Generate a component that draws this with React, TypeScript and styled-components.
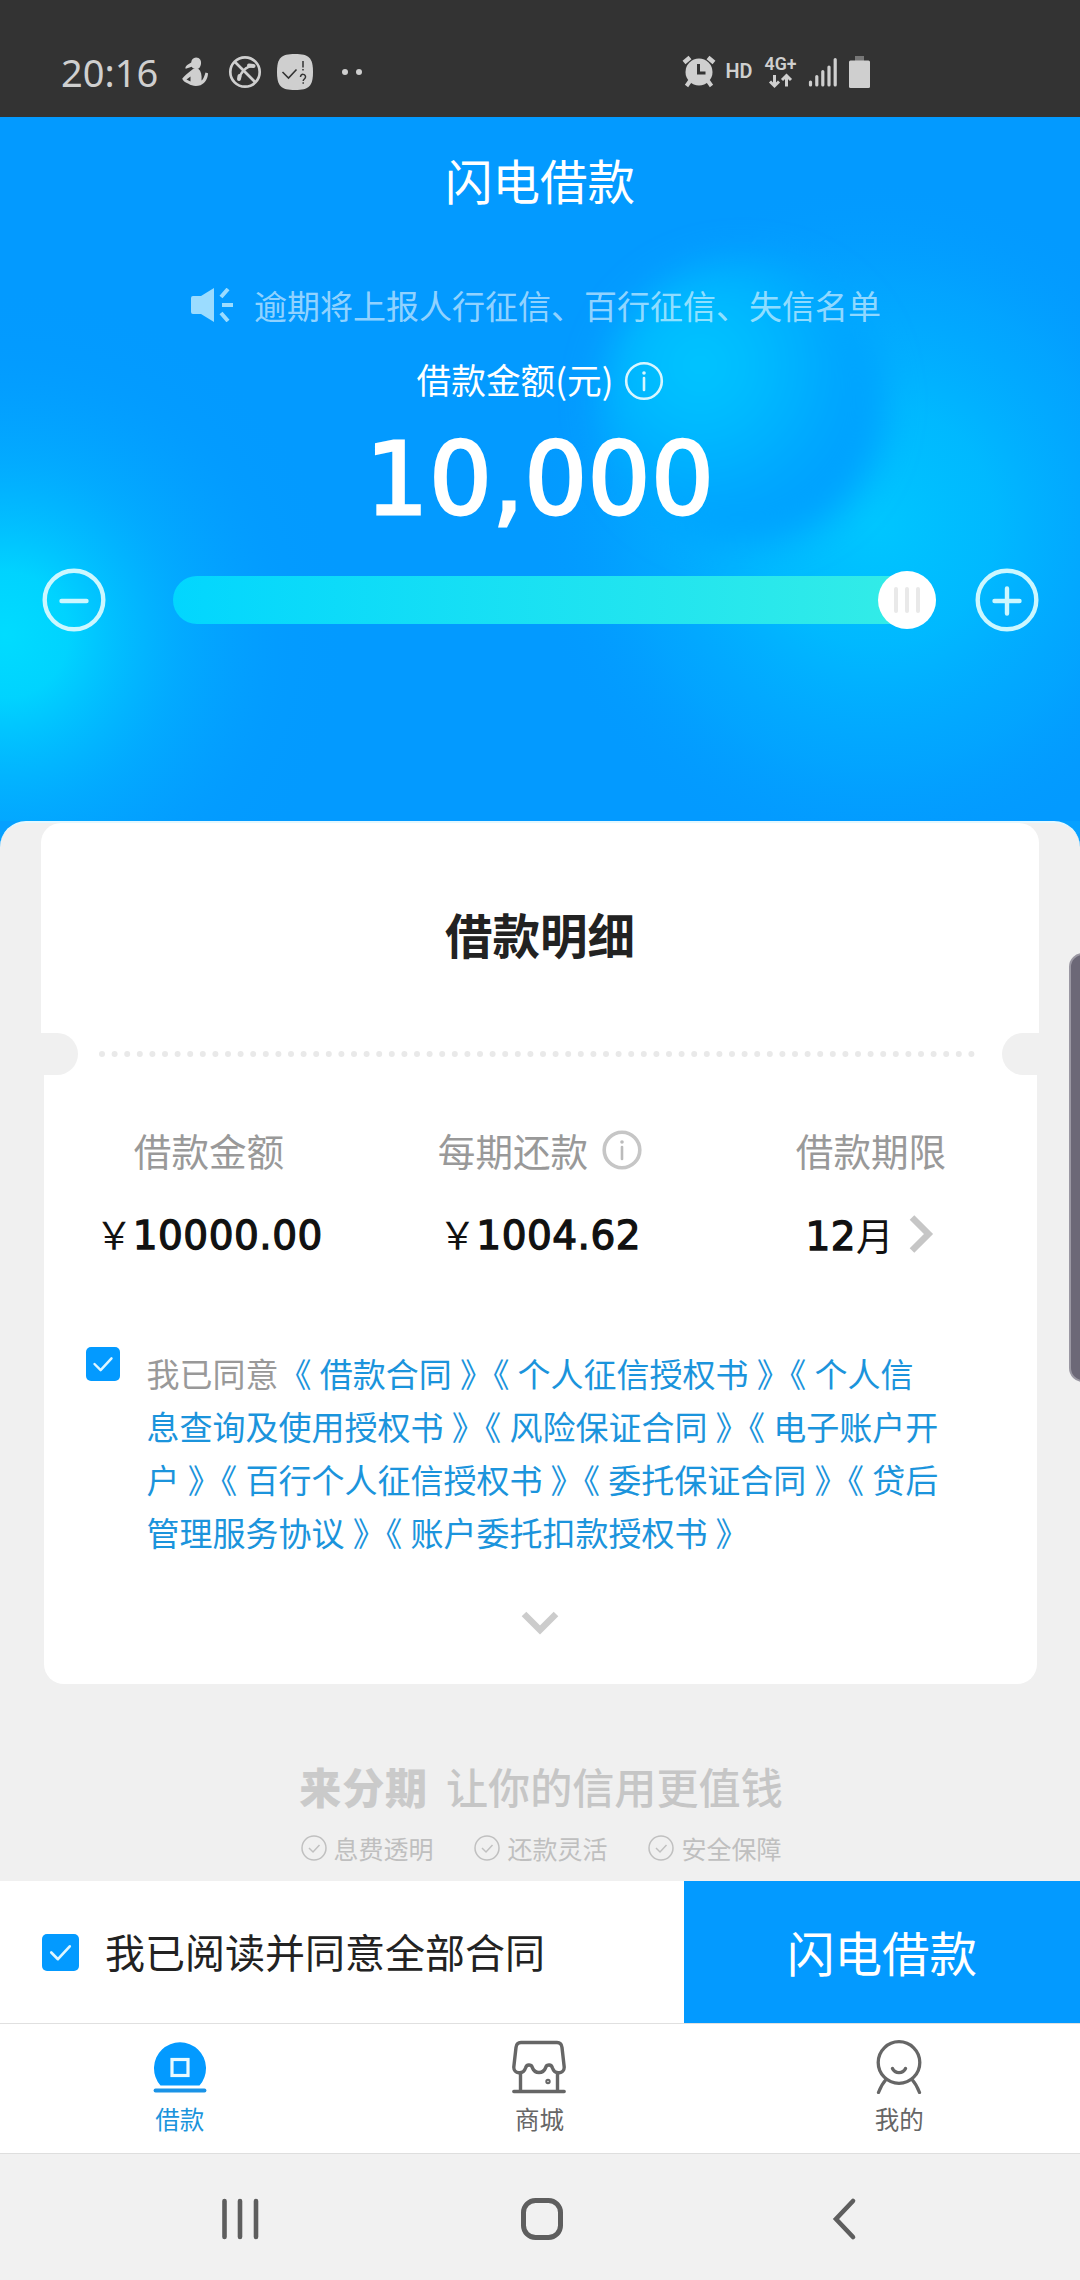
import React from 'react';
import styled, { createGlobalStyle } from 'styled-components';

const Global = createGlobalStyle`
  * { box-sizing: border-box; }
  html, body { margin: 0; padding: 0; }
  body {
    width: 1080px;
    background: #f0f0f0;
    font-family: "Noto Sans", "Noto Sans CJK SC", sans-serif;
  }
  svg { display: block; flex: none; }
`;

const cjk = '"Noto Sans CJK SC", sans-serif';
const digits = '"DejaVu Sans", "Noto Sans CJK SC", sans-serif';

const Screen = styled.div`
  position: relative;
  width: 1080px;
  height: 2280px;
  display: flex;
  flex-direction: column;
  overflow: hidden;
  background: #f0f0f0;
  font-family: ${cjk};
`;

const StatusBar = styled.div`
  height: 117px;
  flex: none;
  display: flex;
  align-items: center;
  padding: 27px 0 0 61px;
  background: #333;
  color: #cfcfcf;
`;

const Clock = styled.span`
  width: 121px;
  font: 400 38px/1 "Noto Sans", sans-serif;
`;

const Hero = styled.header`
  height: 704px;
  flex: none;
  display: flex;
  flex-direction: column;
  align-items: center;
  position: relative;
  background: #039aff;
`;

const HeroArt = styled.svg`
  position: absolute;
  left: 0;
  top: 0;
`;

const Title = styled.h1`
  position: relative;
  margin: 31px 0 0;
  font-size: 47.5px;
  line-height: 64px;
  font-weight: 400;
  color: #fff;
`;

const Notice = styled.div`
  position: relative;
  display: flex;
  align-items: center;
  gap: 20px;
  margin-top: 68px;
  padding-right: 9px;
  font-size: 33px;
  line-height: 50px;
  color: rgba(255, 255, 255, 0.58);
`;

const AmountLabel = styled.div`
  position: relative;
  display: flex;
  align-items: center;
  gap: 11px;
  margin: 24px 0 0 1px;
  font-size: 34.7px;
  line-height: 50px;
  color: #fff;

  svg {
    margin-top: 4px;
  }
`;

const Amount = styled.div`
  position: relative;
  margin-top: 16px;
  font: 400 99px/120px ${digits};
  letter-spacing: 0.4px;
  color: #fff;
  -webkit-text-stroke: 2.8px #fff;
`;

const SliderRow = styled.div`
  position: relative;
  width: 100%;
  display: flex;
  align-items: center;
  justify-content: space-between;
  margin-top: 28px;
  padding: 0 41px 0 42px;
`;

const Track = styled.div`
  width: 763px;
  height: 48px;
  margin-left: 27px;
  display: flex;
  align-items: center;
  justify-content: flex-end;
  border-radius: 24px;
  background: linear-gradient(90deg, #02d6fe, #35ede6);
`;

const Thumb = styled.div`
  width: 58px;
  height: 58px;
  flex: none;
  display: flex;
  align-items: center;
  justify-content: center;
  gap: 7px;
  border-radius: 50%;
  background: #fff;
`;

const Grip = styled.i`
  width: 4px;
  height: 26px;
  border-radius: 2px;
  background: #e9e9e9;
`;

const SheetBack = styled.div`
  flex: none;
  background: #06a0ff;
`;

const Sheet = styled.main`
  height: 1060px;
  display: flex;
  flex-direction: column;
  align-items: center;
  border-radius: 26px 26px 0 0;
  border-top: 2px solid #e4f8ff;
  background: #f0f0f0;
`;

const CardTop = styled.section`
  width: 998px;
  height: 210px;
  display: flex;
  align-items: center;
  justify-content: center;
  padding-top: 10px;
  border-radius: 20px 20px 0 0;
  background: #fff;
  font-size: 47.5px;
  font-weight: 700;
  color: #222;
`;

const Perforation = styled.div`
  width: 998px;
  height: 42px;
  display: flex;
  align-items: center;
  justify-content: space-between;
  background: #fff;

  svg {
    margin-right: 4px;
  }
`;

const Notch = styled.i<{ $side: 'left' | 'right' }>`
  width: 37px;
  height: 42px;
  background: #f0f0f0;
  border-radius: ${(p) => (p.$side === 'left' ? '0 21px 21px 0' : '21px 0 0 21px')};
`;

const CardBody = styled.section`
  width: 993px;
  height: 609px;
  display: flex;
  flex-direction: column;
  align-items: center;
  border-radius: 0 0 20px 20px;
  background: #fff;
`;

const Facts = styled.div`
  width: 100%;
  display: grid;
  grid-template-columns: repeat(3, 331px);
  margin-top: 47px;
`;

const Fact = styled.div`
  display: flex;
  flex-direction: column;
  align-items: center;
`;

const FactLabel = styled.div`
  display: flex;
  align-items: center;
  gap: 14px;
  font-size: 37.6px;
  line-height: 56px;
  color: #999;
`;

const FactValue = styled.div<{ $drop?: number }>`
  display: flex;
  align-items: baseline;
  height: 56px;
  margin-top: ${(p) => 27 + (p.$drop ?? 0)}px;
  font: 400 39px/56px ${digits};
  color: #111;

  svg {
    align-self: center;
    margin: 0 2px 0 14px;
  }
`;

const Num = styled.span`
  -webkit-text-stroke: 1.3px #111;
  letter-spacing: 0.5px;
`;

const Unit = styled.span`
  font: 400 37.5px/56px ${cjk};
`;

const Agreement = styled.div`
  width: 100%;
  display: flex;
  gap: 27px;
  margin-top: 85px;
  padding-left: 42px;
`;

const Box = styled.span<{ $size: number }>`
  width: ${(p) => p.$size}px;
  height: ${(p) => p.$size}px;
  flex: none;
  display: flex;
  align-items: center;
  justify-content: center;
  border-radius: 5px;
  background: #039aff;
`;

const Terms = styled.p`
  width: 795px;
  margin: 0;
  font-size: 33px;
  line-height: 53px;
  word-spacing: 0.8px;
  text-align: left;
  color: #999;
`;

const Link = styled.span`
  color: #1b94dc;
`;

const Fold = styled.div`
  margin-top: 51px;
`;

const Slogan = styled.div`
  display: flex;
  align-items: center;
  gap: 18px;
  margin: 72px 0 0 2px;
  font-size: 42.1px;
  line-height: 60px;
  font-weight: 500;
  color: #c6c6c6;
`;

const Brand = styled.b`
  font-weight: 900;
  letter-spacing: 0.8px;
  color: #cacaca;
`;

const Perks = styled.div`
  width: 481px;
  display: flex;
  justify-content: space-between;
  margin: 14px 0 0 2px;
`;

const Perk = styled.div`
  display: flex;
  align-items: center;
  gap: 7px;
  font-size: 25px;
  line-height: 36px;
  color: #bfbfbf;
`;

const ActionBar = styled.div`
  height: 142px;
  flex: none;
  display: flex;
  background: #fff;
`;

const Consent = styled.div`
  flex: 1;
  display: flex;
  align-items: center;
  gap: 26px;
  padding-left: 42px;
  font-size: 40px;
  color: #222;
`;

const ConsentText = styled.span`
  padding-bottom: 2px;
`;

const Submit = styled.div`
  width: 396px;
  display: flex;
  align-items: center;
  justify-content: center;
  padding-bottom: 2px;
  font-size: 47.5px;
  color: #fff;
  background: #039aff;
`;

const Tabs = styled.nav`
  height: 131px;
  flex: none;
  display: grid;
  grid-template-columns: repeat(3, 1fr);
  padding-right: 1px;
  border-top: 1px solid #e0e0e0;
  border-bottom: 1px solid #dedede;
  background: #fff;
`;

const Tab = styled.div<{ $active?: boolean }>`
  display: flex;
  flex-direction: column;
  align-items: center;
  gap: 7px;
  padding-top: 16px;
  font-size: 24.5px;
  line-height: 36px;
  color: ${(p) => (p.$active ? '#1b94dc' : '#666')};
`;

const SystemNav = styled.div`
  flex: 1;
  display: flex;
  align-items: center;
  justify-content: space-between;
  padding: 4px 223px 0 220px;
  background: #f1f1f1;
`;

const HomeKey = styled.svg`
  margin-right: 7px;
`;

const EdgeHandle = styled.div`
  position: absolute;
  right: -17px;
  top: 953px;
  width: 28px;
  height: 429px;
  border: 2px solid #9b98a3;
  border-radius: 14px;
  background: #6c6877;
`;

const Info = ({ stroke, width, mark }: { stroke: string; width: number; mark: string }) => (
  <svg width="40" height="40" viewBox="0 0 40 40" fill="none">
    <circle cx="20" cy="20" r="17.800" stroke={stroke} strokeWidth={width} />
    <circle cx="20" cy="12" r="1.800" fill={mark} />
    <path d="M20 17v12" stroke={mark} strokeWidth="2.600" strokeLinecap="round" />
  </svg>
);

const Check = ({ size }: { size: number }) => (
  <svg width={size} height={size} viewBox="0 0 36 36" fill="none">
    <path d="M9 18l6.500 6.500L27 12" stroke="#dff6ff" strokeWidth="2.600" strokeLinecap="round" strokeLinejoin="round" />
  </svg>
);

const Round = ({ plus }: { plus?: boolean }) => (
  <svg width="64" height="64" viewBox="0 0 64 64" fill="none" stroke="#ccf7ff" strokeLinecap="round">
    <circle cx="32" cy="32" r="29.300" strokeWidth="4.400" />
    <path d={plus ? 'M19.500 33h25M32 20.500v25' : 'M19.500 33h25'} strokeWidth="4.400" />
  </svg>
);

const StatusIcons = () => (
  <svg width="898" height="50" viewBox="182 47 898 50" fill="#cfcfcf">
    {/* kneeling figure with a ponytail */}
    <path d="M196 57.500c4 0 5.500 3 5 6.500-.5 3-2 5-4.500 5.200-2.300 0-4-1-4.800-2.500l-6 2c-.8-.8 0-2.500 1.500-3.800l4-2.300c.2-3 2-5.100 4.800-5.100z" />
    <path
      fillRule="evenodd"
      d="M193 69h5.500c2.500 2 3.500 6 3 11.500 2-1 3-5 4-8l2.500.8c0 5-3 10-7.500 12-5 1.500-9 .5-12-1.500-3-1.200-5.500-2.700-6.300-5 2-2.800 6.800-6.800 10.800-9.800zM190.500 76.500l-4 3 4 2z"
    />
    {/* blocked call */}
    <g fill="none" stroke="#cfcfcf">
      <circle cx="245" cy="72" r="14.700" strokeWidth="2.700" />
      <path d="M234.500 61.500l21 21" strokeWidth="2.700" />
      <path d="M253 66c-7 0-13 7-13.500 13" strokeWidth="2.500" />
      <path d="M249 65.500l4.500.5M239.500 76l-.5 3" strokeWidth="4" strokeLinecap="round" />
    </g>
    {/* reminder */}
    <path d="M295 54c14 0 18 4 18 18s-4 18-18 18-18-4-18-18 4-18 18-18z" />
    <path d="M282.500 72l6 6 8-8.500" fill="none" stroke="#333" strokeWidth="1.600" />
    <path d="M303 61v6.500M303 69v1.500M300.500 77c0-4 5.500-3 5 0 0 2-2.300 2-2.300 4M303.200 82.300v1.400" fill="none" stroke="#333" strokeWidth="1.500" />
    <circle cx="345" cy="72" r="3" />
    <circle cx="359" cy="72" r="3" />
    {/* alarm */}
    <circle cx="699" cy="72" r="13.500" />
    <path d="M684 62.500l6-5M714 62.500l-6-5" stroke="#cfcfcf" strokeWidth="4.500" />
    <path d="M690 81l-3.500 5M708 81l3.500 5" stroke="#cfcfcf" strokeWidth="4" />
    <path d="M698.500 64v9h7" fill="none" stroke="#333" strokeWidth="3" />
    <text x="725.500" y="77.500" fontFamily="Roboto, sans-serif" fontSize="20.500" fontWeight="600" textLength="27" lengthAdjust="spacingAndGlyphs">HD</text>
    <text x="764.500" y="70" fontFamily="Roboto, sans-serif" fontSize="18.500" fontWeight="600" textLength="32" lengthAdjust="spacingAndGlyphs">4G+</text>
    <path d="M774.500 75v11M770 81.500l4.500 4.500 4.500-4.500M786.500 86.500v-11M782 80l4.500-4.500 4.500 4.500" fill="none" stroke="#cfcfcf" strokeWidth="3" />
    <path d="M810.500 82v3M816.800 76.500v8.500M822.800 71.500v13.500M829 67v18M835.200 59.500v25.500" stroke="#cfcfcf" strokeWidth="3.200" strokeLinecap="round" />
    <path d="M855 56h9v5h-9z" fill="#777" />
    <rect x="849" y="60.500" width="21" height="27.500" rx="1.500" />
  </svg>
);

const perks = ['息费透明', '还款灵活', '安全保障'];

const agreements = [
  '借款合同',
  '个人征信授权书',
  '个人信息查询及使用授权书',
  '风险保证合同',
  '电子账户开户',
  '百行个人征信授权书',
  '委托保证合同',
  '贷后管理服务协议',
  '账户委托扣款授权书',
];

export default function App() {
  return (
    <Screen>
      <Global />
      <StatusBar>
        <Clock>20:16</Clock>
        <StatusIcons />
      </StatusBar>

      <Hero>
        <HeroArt width="1080" height="704" viewBox="0 117 1080 704">
          <defs>
            <radialGradient id="left" gradientUnits="userSpaceOnUse" cx="5" cy="635" r="350">
              <stop offset="0" stopColor="#00dcff" />
              <stop offset="0.180" stopColor="#00d8ff" stopOpacity="0.920" />
              <stop offset="0.500" stopColor="#02bcff" stopOpacity="0.480" />
              <stop offset="0.800" stopColor="#03a4ff" stopOpacity="0.140" />
              <stop offset="1" stopColor="#039aff" stopOpacity="0" />
            </radialGradient>
            <radialGradient id="right" gradientUnits="userSpaceOnUse" cx="875" cy="525" r="345">
              <stop offset="0" stopColor="#00c6ff" />
              <stop offset="0.350" stopColor="#00bcff" stopOpacity="0.900" />
              <stop offset="0.700" stopColor="#02acff" stopOpacity="0.550" />
              <stop offset="1" stopColor="#039aff" stopOpacity="0" />
            </radialGradient>
            <radialGradient id="orb" gradientUnits="userSpaceOnUse" cx="700" cy="365" r="200">
              <stop offset="0" stopColor="#00c6ff" />
              <stop offset="0.350" stopColor="#00b8ff" />
              <stop offset="0.700" stopColor="#02a6ff" />
              <stop offset="1" stopColor="#039eff" />
            </radialGradient>
            <filter id="soft" x="-30%" y="-30%" width="160%" height="160%">
              <feGaussianBlur stdDeviation="18" />
            </filter>
          </defs>
          <rect y="117" width="1080" height="704" fill="url(#left)" />
          <rect y="117" width="1080" height="704" fill="url(#right)" />
          <circle cx="743" cy="402" r="142" fill="url(#orb)" filter="url(#soft)" />
        </HeroArt>
        <Title>闪电借款</Title>
        <Notice>
          <svg width="44" height="34" viewBox="0 0 44 34" fill="#9bdcff">
            <path d="M1 10q0-2 2-2h8L24 0v34L11 26H3q-2 0-2-2z" />
            <path d="M31 9l7-8M32 17h11M31 25l7 8" stroke="#9bdcff" strokeWidth="4" />
          </svg>
          逾期将上报人行征信、百行征信、失信名单
        </Notice>
        <AmountLabel>
          借款金额(元)
          <Info stroke="#d8f6ff" width={2.6} mark="#d8f6ff" />
        </AmountLabel>
        <Amount>10,000</Amount>
        <SliderRow>
          <Round />
          <Track>
            <Thumb>
              <Grip />
              <Grip />
              <Grip />
            </Thumb>
          </Track>
          <Round plus />
        </SliderRow>
      </Hero>

      <SheetBack>
        <Sheet>
          <CardTop>借款明细</CardTop>
          <Perforation>
            <Notch $side="left" />
            <svg width="880" height="8" viewBox="0 0 880 8">
              <path d="M4 4H876" stroke="#e9e9e9" strokeWidth="6" strokeLinecap="round" strokeDasharray="0 12.600" />
            </svg>
            <Notch $side="right" />
          </Perforation>
          <CardBody>
            <Facts>
              <Fact>
                <FactLabel>借款金额</FactLabel>
                <FactValue>
                  <Unit>￥</Unit>
                  <Num>10000.00</Num>
                </FactValue>
              </Fact>
              <Fact>
                <FactLabel>
                  每期还款
                  <Info stroke="#c6c6c6" width={3.6} mark="#bbb" />
                </FactLabel>
                <FactValue>
                  <Unit>￥</Unit>
                  <Num>1004.62</Num>
                </FactValue>
              </Fact>
              <Fact>
                <FactLabel>借款期限</FactLabel>
                <FactValue $drop={1}>
                  <Num>12</Num>
                  <Unit>月</Unit>
                  <svg width="27" height="38" viewBox="0 0 27 38" fill="none">
                    <path d="M4 2.500L20.500 19 4 35.500" stroke="#c6c6c6" strokeWidth="6.500" />
                  </svg>
                </FactValue>
              </Fact>
            </Facts>
            <Agreement>
              <Box $size={34}>
                <Check size={34} />
              </Box>
              <Terms>
                我已同意<Link>{agreements.map((name) => `《 ${name} 》`).join('')}</Link>
              </Terms>
            </Agreement>
            <Fold>
              <svg width="38" height="26" viewBox="0 0 38 26" fill="none">
                <path d="M3 4l16 16L35 4" stroke="#ccc" strokeWidth="6.500" />
              </svg>
            </Fold>
          </CardBody>
          <Slogan>
            <Brand>来分期</Brand>
            <span>让你的信用更值钱</span>
          </Slogan>
          <Perks>
            {perks.map((p) => (
              <Perk key={p}>
                <svg width="26" height="26" viewBox="0 0 26 26" fill="none" stroke="#c0c0c0" strokeWidth="1.500">
                  <circle cx="13" cy="13" r="12" />
                  <path d="M8 13l4 4 6.500-7" />
                </svg>
                {p}
              </Perk>
            ))}
          </Perks>
        </Sheet>
      </SheetBack>

      <ActionBar>
        <Consent>
          <Box $size={37}>
            <Check size={37} />
          </Box>
          <ConsentText>我已阅读并同意全部合同</ConsentText>
        </Consent>
        <Submit>闪电借款</Submit>
      </ActionBar>

      <Tabs>
        <Tab $active>
          <svg width="54" height="54" viewBox="0 0 54 54">
            <path d="M7.500 45.500a26 26 0 1 1 39 0z" fill="#039aff" />
            <rect x="19" y="19.500" width="16" height="16" fill="none" stroke="#e8faff" strokeWidth="3.200" />
            <path d="M2.500 50.500h49" stroke="#1b93e6" strokeWidth="3.800" strokeLinecap="round" />
          </svg>
          借款
        </Tab>
        <Tab>
          <svg width="54" height="54" viewBox="0 0 54 54" fill="none" stroke="#666" strokeWidth="3.400" strokeLinecap="round" strokeLinejoin="round">
            <path d="M9 2.500h36q4.500 0 5 5L52.200 27c.3 7-9.500 8-11.700 1q-1-3.500-4-3-2.500.3-3 3c-2.500 6-10.500 6-13 0q-.5-2.700-3-3-3-.5-4 3c-2.200 7-12 6-11.700-1L4 7.500q.5-5 5-5z" />
            <path d="M8.500 33v18M45.500 33v18M1.800 51.500h50.400" />
            <circle cx="36" cy="41.500" r="1" />
          </svg>
          商城
        </Tab>
        <Tab>
          <svg width="54" height="54" viewBox="0 0 54 54" fill="none" stroke="#666" strokeWidth="3.300" strokeLinecap="round">
            <circle cx="27" cy="22.500" r="20.800" />
            <path d="M20.500 28.500c2.500 5.500 10.500 5.500 13 0M14 39.500q-4.500 5-7.500 13M40 39.500q4.500 5 7.500 13" />
          </svg>
          我的
        </Tab>
      </Tabs>

      <SystemNav>
        <svg width="40" height="44" viewBox="0 0 40 44" stroke="#5e5e5e" strokeWidth="4.600" strokeLinecap="round">
          <path d="M4.500 4v36M20 4v36M36 4v36" />
        </svg>
        <HomeKey width="44" height="44" viewBox="0 0 44 44" fill="none" stroke="#5e5e5e" strokeWidth="5">
          <rect x="3.500" y="3.500" width="37" height="37" rx="12" />
        </HomeKey>
        <svg width="26" height="44" viewBox="0 0 26 44" fill="none" stroke="#5e5e5e" strokeWidth="4.600" strokeLinecap="round">
          <path d="M22 4L5 22l17 18" />
        </svg>
      </SystemNav>

      <EdgeHandle />
    </Screen>
  );
}
